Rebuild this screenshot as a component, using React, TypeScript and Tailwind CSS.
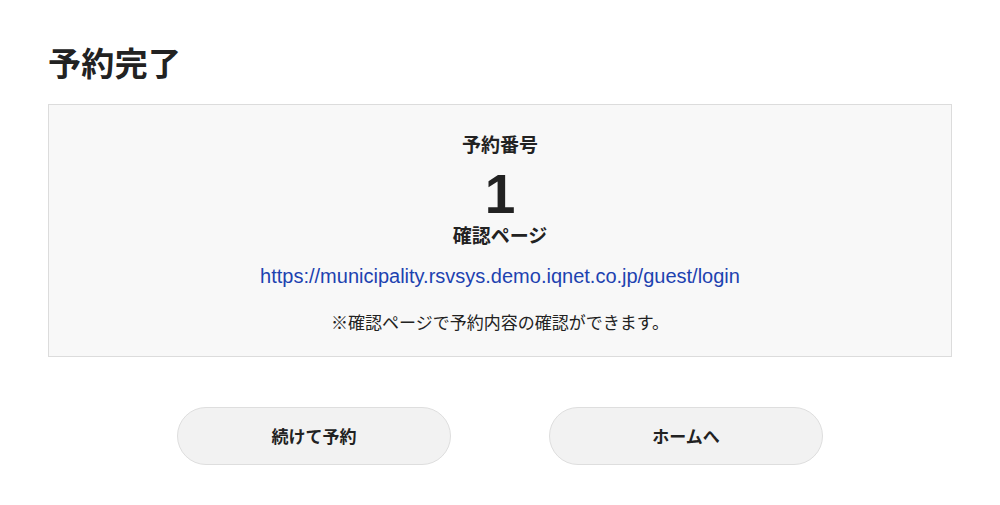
const jp = { fontFamily: '"Noto Sans CJK JP", "Noto Sans", sans-serif' }

export default function App() {
    return (
        <div
            className="w-[1000px] h-[505px] bg-white px-[48px] pt-[37px] text-[#222]"
            style={jp}
        >
            <h1 className="text-[33px] leading-[50px] font-bold tracking-[0.01em]">
                予約完了
            </h1>
            <div className="mt-[17px] border border-[#dcdcdc] bg-[#f8f8f8] pt-[25px] pb-[22px] flex flex-col items-center">
                <p className="text-[19px] leading-[28px] font-bold">予約番号</p>
                <p
                    className="mt-[12px] text-[55px] leading-[48px] font-bold"
                    style={{ fontFamily: '"Liberation Sans", sans-serif' }}
                >
                    1
                </p>
                <p className="mt-[3px] text-[19px] leading-[28px] font-bold">
                    確認ページ
                </p>
                <a
                    href="#"
                    className="mt-[15px] text-[20px] leading-[24px] text-[#1d42b0]"
                    style={{ fontFamily: '"Liberation Sans", sans-serif' }}
                >
                    https://municipality.rsvsys.demo.iqnet.co.jp/guest/login
                </a>
                <p className="mt-[22px] text-[17px] leading-[24px]">
                    ※確認ページで予約内容の確認ができます。
                </p>
            </div>
            <div className="mt-[50px] flex justify-center gap-[98px]">
                <button className="w-[274px] h-[58px] rounded-full border border-[#dedede] bg-[#f2f2f2] text-[17px] font-bold">
                    続けて予約
                </button>
                <button className="w-[274px] h-[58px] rounded-full border border-[#dedede] bg-[#f2f2f2] text-[17px] font-bold">
                    ホームへ
                </button>
            </div>
        </div>
    )
}
